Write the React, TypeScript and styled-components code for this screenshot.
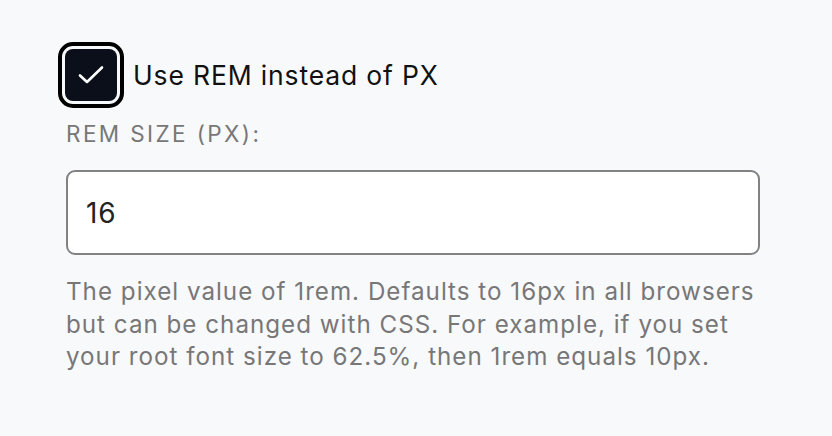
import React from "react";
import styled, { createGlobalStyle } from "styled-components";

const Global = createGlobalStyle`
  html, body { margin: 0; padding: 0; background: #f8f9fb; }
  body { font-family: Inter, "Noto Sans", sans-serif; -webkit-font-smoothing: antialiased; }
`;

const Page = styled.div`
  width: 832px;
  height: 436px;
  box-sizing: border-box;
  padding: 49px 72px 0 66px;
  display: flex;
  flex-direction: column;
`;

const CheckRow = styled.label`
  display: flex;
  align-items: center;
  gap: 16px;
  margin-left: -1px;
`;

const Box = styled.span`
  width: 52px;
  height: 52px;
  box-sizing: border-box;
  border-radius: 8px;
  background: #0b0f19;
  outline: 4px solid #000;
  outline-offset: 3px;
  display: flex;
  align-items: center;
  justify-content: center;
  flex-shrink: 0;
`;

const CheckText = styled.span`
  font-size: 26.5px;
  color: #111;
  line-height: 32px;
  letter-spacing: 0.85px;
`;

const FieldLabel = styled.div`
  margin-top: 18px;
  font-size: 22.5px;
  line-height: 30px;
  color: #777;
  letter-spacing: 2.4px;
`;

const Input = styled.div`
  margin-top: 21px;
  height: 85px;
  box-sizing: border-box;
  border: 2px solid #828282;
  border-radius: 9px;
  background: #fff;
  display: flex;
  align-items: center;
  padding-left: 18px;
  font-size: 28px;
  color: #222;
  letter-spacing: 0.8px;
`;

const Help = styled.p`
  margin: 21px -8px 0 0;
  font-size: 24.2px;
  line-height: 32.5px;
  color: #777;
  letter-spacing: 1px;
`;

export default function App() {
  return (
    <>
      <Global />
      <Page>
        <CheckRow>
          <Box>
            <svg width="26" height="20" viewBox="0 0 26 20" fill="none">
              <path d="M2 10.5 L9 17 L24 2.5" stroke="#fff" strokeWidth="2.6" strokeLinecap="round" strokeLinejoin="round" />
            </svg>
          </Box>
          <CheckText>Use REM instead of PX</CheckText>
        </CheckRow>
        <FieldLabel>REM SIZE (PX):</FieldLabel>
        <Input>16</Input>
        <Help>
          The pixel value of 1rem. Defaults to 16px in all browsers but can be changed with CSS. For example, if you set your root font size to 62.5%, then 1rem equals 10px.
        </Help>
      </Page>
    </>
  );
}
